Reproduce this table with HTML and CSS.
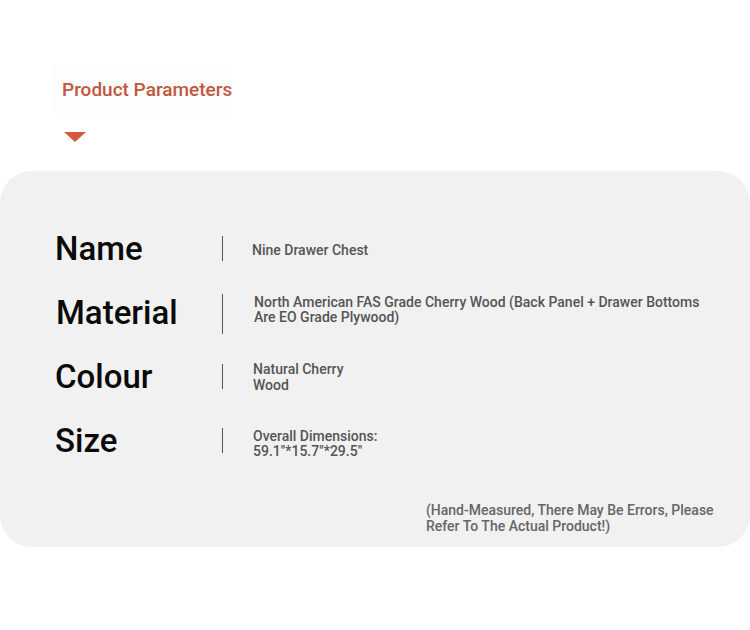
FILE: index.html
```html
<!DOCTYPE html>
<html>
<head>
<meta charset="utf-8">
<link rel="stylesheet" href="styles.css">
</head>
<body>
<div class="page">
  <div class="head">
    <div class="title">Product Parameters</div>
    <div class="arrow"></div>
  </div>
  <div class="panel">
    <div class="rows">
      <div class="row">
        <div class="label">Name</div>
        <div class="bar"></div>
        <div class="value value-name">Nine Drawer Chest</div>
      </div>
      <div class="row">
        <div class="label label-material">Material</div>
        <div class="bar bar-tall"></div>
        <div class="value value-material">North American FAS Grade Cherry Wood (Back Panel + Drawer Bottoms<br>Are EO Grade Plywood)</div>
      </div>
      <div class="row">
        <div class="label">Colour</div>
        <div class="bar"></div>
        <div class="value value-colour">Natural Cherry<br>Wood</div>
      </div>
      <div class="row">
        <div class="label">Size</div>
        <div class="bar"></div>
        <div class="value value-size">Overall Dimensions:<br>59.1"*15.7"*29.5"</div>
      </div>
    </div>
    <div class="note">(Hand-Measured, There May Be Errors, Please<br>Refer To The Actual Product!)</div>
  </div>
</div>
</body>
</html>
```
FILE: styles.css
```css
html, body {
  margin: 0;
  padding: 0;
  background: #ffffff;
}
body {
  font-family: Roboto, "Liberation Sans", sans-serif;
  width: 750px;
  height: 630px;
  overflow: hidden;
}
.page {
  padding-top: 64px;
}
.head {
  padding-left: 52px;
  height: 107px;
}
.title {
  display: inline-block;
  width: 178px;
  height: 49px;
  box-sizing: border-box;
  padding-left: 10px;
  line-height: 51px;
  font-size: 19px;
  font-weight: 500;
  color: #c2573c;
  background: #fdfdfd;
  white-space: nowrap;
}
.arrow {
  margin-top: 19px;
  margin-left: 12px;
  width: 0;
  height: 0;
  border-left: 11px solid transparent;
  border-right: 11px solid transparent;
  border-top: 10px solid #d9573a;
}
.panel {
  background: #f1f1f1;
  border-radius: 32px;
  height: 376px;
  box-sizing: border-box;
  padding-top: 45px;
}
.rows {
  padding-left: 55px;
}
.row {
  display: flex;
  align-items: center;
  height: 64px;
}
.label {
  width: 167px;
  font-size: 33px;
  font-weight: 500;
  color: #0a0a0a;
}
.label-material {
  padding-left: 1px;
  width: 166px;
}
.bar {
  width: 1px;
  height: 25px;
  background: #555555;
}
.bar-tall {
  height: 40px;
  margin-top: 4px;
}
.value {
  margin-left: 29px;
  font-size: 14px;
  font-weight: 500;
  color: #555555;
  line-height: 16px;
}
.value-name {
  margin-top: 4px;
}
.value-material {
  margin-left: 31px;
  line-height: 15px;
  margin-top: -5px;
}
.value-colour {
  margin-left: 30px;
  line-height: 16px;
  margin-top: 2px;
}
.value-size {
  margin-left: 30px;
  line-height: 15px;
  margin-top: 7px;
}
.note {
  margin-top: 30px;
  padding-left: 426px;
  font-size: 14px;
  font-weight: 500;
  color: #666666;
  line-height: 16px;
}
```
